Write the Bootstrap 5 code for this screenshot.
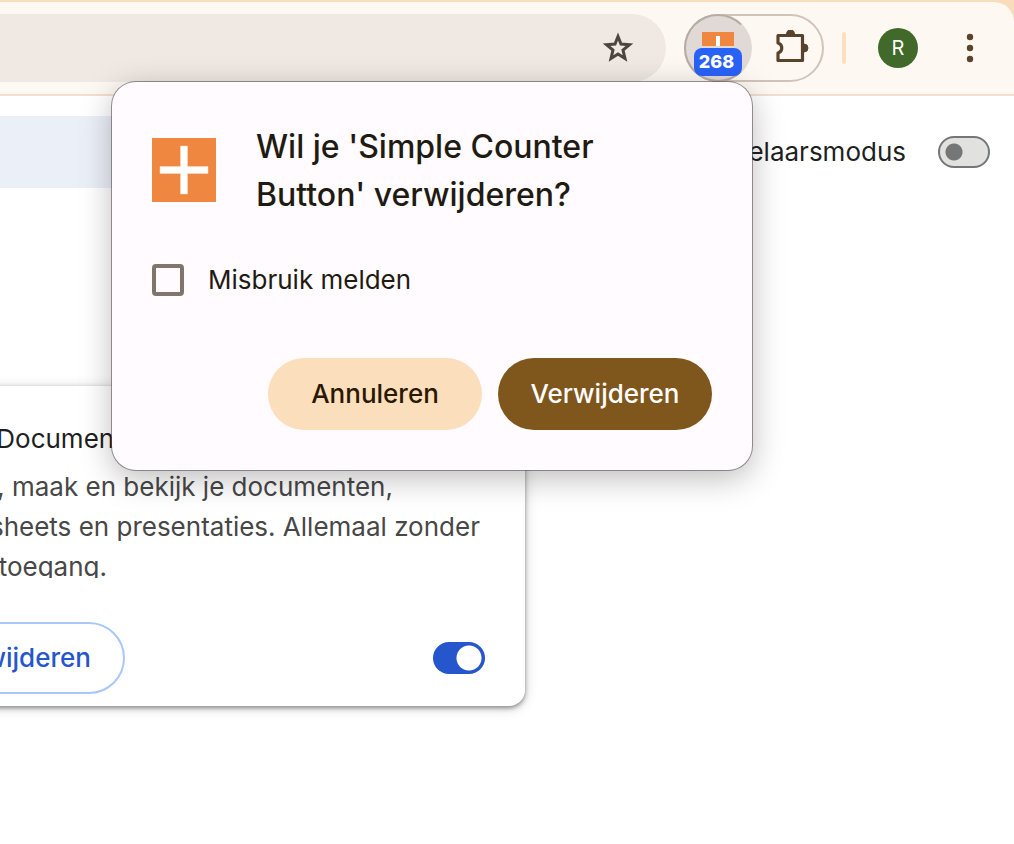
<!DOCTYPE html>
<html lang="nl">
<head>
<meta charset="utf-8">
<meta name="viewport" content="width=device-width, initial-scale=1">
<title>Extensies</title>
<link href="https://cdn.jsdelivr.net/npm/bootstrap@5.3.0/dist/css/bootstrap.min.css" rel="stylesheet">
<style>
  body { font-family: Inter, "Liberation Sans", sans-serif; font-size: 26px; line-height: 40px; color: #1f1f1f; background: #fff; }
  main { overflow: hidden; padding-bottom: 32px; }
  .window-frame { background: #f9dcb9; padding-top: 2px; }
  .browser-bar { background: #fef8f3; border-bottom: 2px solid #f1dfd0; border-top-right-radius: 20px; padding: 12px 24px 12px 0; gap: 18px; }
  .address-bar { background: #efe8e3; height: 68px; border-radius: 0 34px 34px 0; padding-right: 30px; }
  .plain-btn { background: none; border: 0; padding: 0; display: flex; align-items: center; justify-content: center; }
  .ext-pill { height: 68px; width: 140px; border: 2px solid #d0c4ba; border-radius: 34px; }
  .ext-active { width: 68px; height: 68px; margin: -2px; border-radius: 50%; background: #e1d9d5; border: 2px solid #b6aca4; border-right-color: #e1d9d5; }
  .ext-count { left: 8px; top: 32px; width: 48px; height: 28px; border-radius: 8px; background: #2962f6; color: #fff; font-size: 18px; font-weight: 800; line-height: 28px; padding-right: 3px; }
  .ext-menu { width: 84px; }
  .bar-divider { width: 4px; height: 32px; border-radius: 2px; background: #fbdfbf; margin-right: 14px; }
  .avatar { width: 40px; height: 40px; border-radius: 50%; background: #40692a; color: #fff; font-size: 20px; line-height: 40px; margin-right: 14px; }
  .dots-btn { width: 40px; height: 40px; }
  .page-bar { padding: 20px 24px 20px 0; gap: 32px; }
  .ext-search { background: #ebeff8; border: 0; height: 72px; width: 50%; padding: 0 24px; }
  .dev-label { gap: 32px; }
  .switch-input { appearance: none; flex: none; width: 52px; height: 32px; margin: 0; border-radius: 16px; border: 2px solid #747775; }
  .dev-switch { background: radial-gradient(circle at 14px 14px, #747775 8px, transparent 9px), #e1e2e0; }
  .card-switch { border: 0; background: radial-gradient(circle at 36px 16px, #fff 12px, transparent 13px), #2556cb; }
  .ext-card { width: 800px; margin-left: -275px; margin-top: 178px; border-radius: 16px; padding: 33px 40px 12px; box-shadow: 0 2px 4px rgba(60,60,60,.5), 0 2px 12px rgba(60,60,60,.25); background: #fff; }
  .ext-logo { width: 72px; height: 72px; border-radius: 50%; background: #e8eaed; margin-right: 68px; }
  .ext-name { font-size: 26px; line-height: 40px; margin: 0 0 8px -4px; font-weight: 400; }
  .ext-text { color: #474747; line-height: 40px; height: 111px; margin: 0 0 44px; overflow: hidden; }
  .card-actions { margin-left: -26px; }
  .line-btn { height: 72px; border: 2px solid #a8c7fa; border-radius: 36px; background: #fff; color: #2556cb; font-size: 26px; font-weight: 500; padding: 0 32px; }
  .confirm { top: 82px; right: 262px; width: 640px; max-width: 100%; border-radius: 24px; background: #fffbff; padding: 40px; box-shadow: 0 0 0 1px rgba(90,80,80,.6), 0 8px 32px rgba(0,0,0,.27); color: #1f1b13; z-index: 5; }
  .confirm h1 { font-size: 32px; line-height: 48px; font-weight: 500; margin: 1px 0 0; }
  .confirm-head { gap: 40px; }
  .confirm-logo { margin-top: 16px; }
  .report { gap: 24px; margin: 41px 0 58px; }
  .report-box { appearance: none; width: 32px; height: 32px; margin: 0; border: 4px solid #81756a; border-radius: 4px; background: transparent; }
  .fill-btn { width: 214px; height: 72px; border: 0; border-radius: 36px; font-size: 26px; font-weight: 500; padding: 0; }
  .cancel { background: #fbdebc; color: #2a1800; }
  .remove { background: #7f561b; color: #fff; }
</style>
</head>
<body>
<header class="window-frame">
  <nav class="browser-bar d-flex align-items-center" aria-label="Werkbalk">
    <div class="address-bar flex-grow-1 d-flex align-items-center justify-content-end">
      <button class="plain-btn" aria-label="Bladwijzer">
        <svg width="36" height="36" viewBox="0 0 36 36"><path d="M18 6.500 L21 14 L29.500 14.700 L23 20.100 L25 28.400 L18 24 L11 28.400 L13 20.100 L6.500 14.700 L15 14 Z" fill="none" stroke="#4d453e" stroke-width="3"/></svg>
      </button>
    </div>
    <div class="ext-pill d-flex flex-shrink-0">
      <button class="plain-btn ext-active position-relative align-items-start flex-shrink-0" aria-label="Simple Counter Button">
        <svg class="mt-3" width="32" height="14" viewBox="0 0 32 14"><path d="M0 0H32V14H0Z" fill="#f08741"/><path d="M14 4H18V14H14Z" fill="#fff"/></svg>
        <span class="ext-count position-absolute">268</span>
      </button>
      <button class="plain-btn ext-menu flex-shrink-0" aria-label="Extensies">
        <svg width="36" height="36" viewBox="0 0 36 36"><path d="M4 5.500H28.500V30.500H4V23A5.200 5.200 0 0 0 4 13Z" fill="none" stroke="#58432c" stroke-width="3.200" stroke-linejoin="round"/><path d="M12.500 4A4 4 0 0 1 20.500 4ZM30 14A4 4 0 0 1 30 22Z" fill="#58432c" stroke="#58432c"/></svg>
      </button>
    </div>
    <span class="bar-divider flex-shrink-0"></span>
    <button class="plain-btn avatar flex-shrink-0" aria-label="Profiel">R</button>
    <button class="plain-btn dots-btn flex-shrink-0" aria-label="Menu">
      <svg width="8" height="30" viewBox="0 0 8 30"><g fill="#5b432d"><circle cx="4" cy="4" r="3.200"/><circle cx="4" cy="15" r="3.200"/><circle cx="4" cy="26" r="3.200"/></g></svg>
    </button>
  </nav>
</header>
<main>
  <div class="page-bar d-flex align-items-center justify-content-between">
    <input class="ext-search" type="search" aria-label="Extensies zoeken">
    <label class="dev-label d-flex align-items-center" for="dev">Ontwikkelaarsmodus
      <input class="switch-input dev-switch" type="checkbox" role="switch" id="dev">
    </label>
  </div>
  <article class="ext-card">
    <div class="d-flex">
      <div class="ext-logo flex-shrink-0"></div>
      <div class="flex-grow-1">
        <h2 class="ext-name">Google Documenten offline</h2>
        <p class="ext-text">Bewerk, maak en bekijk je documenten, spreadsheets en presentaties. Allemaal zonder internettoegang.</p>
      </div>
    </div>
    <div class="card-actions d-flex align-items-center justify-content-between">
      <div class="d-flex gap-3">
        <button class="line-btn">Details</button>
        <button class="line-btn">Verwijderen</button>
      </div>
      <input class="switch-input card-switch" type="checkbox" role="switch" checked aria-label="Aan">
    </div>
  </article>
</main>
<section class="confirm position-absolute" role="dialog" aria-labelledby="confirm-title">
  <div class="confirm-head d-flex align-items-start">
    <svg class="confirm-logo flex-shrink-0" width="64" height="64" viewBox="0 0 64 64"><path d="M0 0H64V64H0Z" fill="#f08741"/><path d="M28.500 8H35.500V28.500H56V35.500H35.500V56H28.500V35.500H8V28.500H28.500Z" fill="#fff" stroke="#fbdcc6" stroke-width=".5"/></svg>
    <h1 id="confirm-title">Wil je 'Simple Counter<br>Button' verwijderen?</h1>
  </div>
  <div class="report d-flex align-items-center">
    <input class="report-box" type="checkbox" id="report">
    <label for="report">Misbruik melden</label>
  </div>
  <div class="d-flex justify-content-end gap-3">
    <button class="fill-btn cancel">Annuleren</button>
    <button class="fill-btn remove">Verwijderen</button>
  </div>
</section>
<script src="https://cdn.jsdelivr.net/npm/bootstrap@5.3.0/dist/js/bootstrap.bundle.min.js"></script>
</body>
</html>
